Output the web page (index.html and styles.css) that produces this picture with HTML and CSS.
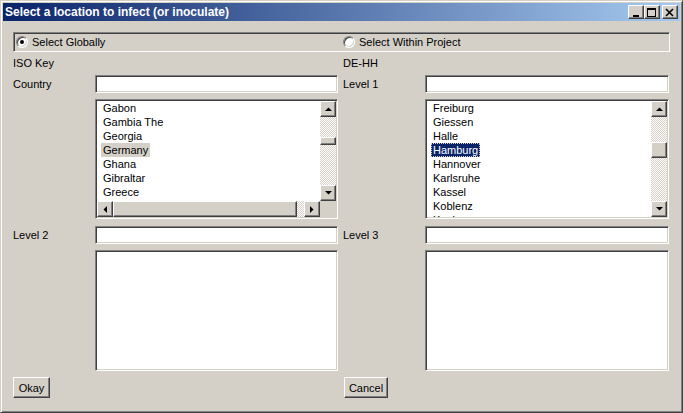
FILE: index.html
```html
<!DOCTYPE html>
<html>
<head>
<meta charset="utf-8">
<link rel="stylesheet" href="styles.css">
</head>
<body>
<div class="window">
  <div class="titlebar">
    <span class="title">Select a location to infect (or inoculate)</span>
    <div class="tb-buttons">
      <span class="raised tb-btn"><svg width="10" height="9" viewBox="0 0 10 9"><rect x="2" y="7" width="6" height="2" fill="#000"/></svg></span>
      <span class="raised tb-btn"><svg width="10" height="9" viewBox="0 0 10 9"><path d="M0 0h9v9h-9z M1 2v6h7v-6z" fill="#000" fill-rule="evenodd"/></svg></span>
      <span class="raised tb-btn close"><svg width="10" height="9" viewBox="0 0 10 9"><path d="M1 1l7 7M8 1l-7 7" stroke="#000" stroke-width="1.6"/></svg></span>
    </div>
  </div>
  <div class="content">
    <div class="radio-group">
      <label class="radio-opt"><span class="radio checked"></span>Select Globally</label>
      <label class="radio-opt"><span class="radio"></span>Select Within Project</label>
    </div>
    <div class="form">
      <div class="label">ISO Key</div>
      <div></div>
      <div class="label label-r">DE-HH</div>
      <div></div>

      <div class="label">Country</div>
      <div class="sunken field"></div>
      <div class="label label-r">Level 1</div>
      <div class="sunken field"></div>

      <div></div>
      <div class="sunken listbox with-h">
        <div class="items">
          <span class="item">Gabon</span>
          <span class="item">Gambia The</span>
          <span class="item">Georgia</span>
          <span class="item sel-inactive">Germany</span>
          <span class="item">Ghana</span>
          <span class="item">Gibraltar</span>
          <span class="item">Greece</span>
          <span class="item">Greenland</span>
        </div>
        <div class="vscroll">
          <span class="raised sbtn"><svg width="7" height="4" viewBox="0 0 7 4"><polygon points="0,4 7,4 3.5,0.5" fill="#000"/></svg></span>
          <span class="track track-l1"></span>
          <span class="raised thumb thumb-l"></span>
          <span class="track grow"></span>
          <span class="raised sbtn"><svg width="7" height="4" viewBox="0 0 7 4"><polygon points="0,0 7,0 3.5,3.5" fill="#000"/></svg></span>
        </div>
        <div class="hscroll">
          <span class="raised sbtn"><svg width="4" height="7" viewBox="0 0 4 7"><polygon points="4,0 4,7 0.5,3.5" fill="#000"/></svg></span>
          <span class="raised hthumb"></span>
          <span class="track grow"></span>
          <span class="raised sbtn"><svg width="4" height="7" viewBox="0 0 4 7"><polygon points="0,0 0,7 3.5,3.5" fill="#000"/></svg></span>
        </div>
        <div class="corner"></div>
      </div>
      <div></div>
      <div class="sunken listbox">
        <div class="items">
          <span class="item">Freiburg</span>
          <span class="item">Giessen</span>
          <span class="item">Halle</span>
          <span class="item sel-active">Hamburg</span>
          <span class="item">Hannover</span>
          <span class="item">Karlsruhe</span>
          <span class="item">Kassel</span>
          <span class="item">Koblenz</span>
          <span class="item">Koeln</span>
        </div>
        <div class="vscroll">
          <span class="raised sbtn"><svg width="7" height="4" viewBox="0 0 7 4"><polygon points="0,4 7,4 3.5,0.5" fill="#000"/></svg></span>
          <span class="track track-r1"></span>
          <span class="raised thumb thumb-r"></span>
          <span class="track grow"></span>
          <span class="raised sbtn"><svg width="7" height="4" viewBox="0 0 7 4"><polygon points="0,0 7,0 3.5,3.5" fill="#000"/></svg></span>
        </div>
      </div>

      <div class="label">Level 2</div>
      <div class="sunken field"></div>
      <div class="label label-r">Level 3</div>
      <div class="sunken field"></div>

      <div></div>
      <div class="sunken area"></div>
      <div></div>
      <div class="sunken area"></div>

      <div><span class="raised button okay">Okay</span></div>
      <div></div>
      <div><span class="raised button cancel">Cancel</span></div>
      <div></div>
    </div>
  </div>
</div>
</body>
</html>
```
FILE: styles.css
```css
* { box-sizing: border-box; }
body {
  margin: 0;
  font: 11px "Liberation Sans", Arial, sans-serif;
  color: #000;
}
.window {
  width: 683px;
  height: 413px;
  background: #d4d0c8;
  border: 1px solid;
  border-color: #d4d0c8 #404040 #404040 #d4d0c8;
  box-shadow: inset 1px 1px #fff, inset -1px -1px #808080;
  padding: 2px;
  display: flex;
  flex-direction: column;
}
.raised {
  background: #d4d0c8;
  border: 1px solid;
  border-color: #fff #404040 #404040 #fff;
  box-shadow: inset -1px -1px #808080, inset 1px 1px #d4d0c8;
}
.sunken {
  background: #fff;
  border: 1px solid;
  border-color: #808080 #fff #fff #808080;
  box-shadow: inset 1px 1px #404040, inset -1px -1px #d4d0c8;
}
.titlebar {
  height: 18px;
  flex: none;
  background: linear-gradient(to right, #0a246a, #a6caf0);
  display: flex;
  justify-content: space-between;
  align-items: flex-start;
  color: #fff;
}
.title {
  font-weight: bold;
  font-size: 12px;
  line-height: 18px;
  padding-left: 2px;
}
.tb-buttons {
  display: flex;
  margin-top: 2px;
  margin-right: 2px;
}
.tb-btn {
  width: 16px;
  height: 14px;
  display: flex;
  align-items: center;
  justify-content: center;
}
.tb-btn.close { margin-left: 2px; }
.content {
  padding: 11px 0 0 10px;
}
.radio-group {
  width: 657px;
  height: 20px;
  border: 1px solid;
  border-color: #808080 #fff #fff #808080;
  box-shadow: inset 1px 1px #404040;
  display: grid;
  grid-template-columns: 327px 1fr;
  align-items: center;
  padding-left: 2px;
}
.radio-opt {
  display: flex;
  align-items: center;
  gap: 4px;
}
.radio {
  width: 12px;
  height: 12px;
  border-radius: 50%;
  border: 1px solid;
  border-color: #808080 #fff #fff #808080;
  box-shadow: inset 1px 1px #404040, inset -1px -1px #d4d0c8;
  background: #fff;
  display: flex;
  align-items: center;
  justify-content: center;
}
.radio.checked::after {
  content: "";
  width: 4px;
  height: 4px;
  border-radius: 50%;
  background: #000;
}
.form {
  margin-top: 4px;
  display: grid;
  grid-template-columns: 82px 243px 87px 244px;
  grid-template-rows: 13px 18px 121px 18px 121px 21px;
  row-gap: 6px;
  align-items: center;
}
.label { line-height: 14px; }
.label-r { padding-left: 5px; }
.field { height: 18px; }
.listbox {
  align-self: start;
  height: 120px;
  display: grid;
  grid-template-columns: 1fr 16px;
  grid-template-rows: 1fr;
  overflow: hidden;
  padding: 1px;
}
.listbox.with-h { grid-template-rows: 1fr 16px; }
.items {
  overflow: hidden;
  display: flex;
  flex-direction: column;
  align-items: flex-start;
  min-height: 0;
}
.item {
  flex: none;
  line-height: 14px;
  height: 14px;
  margin-left: 4px;
  padding: 0 2px;
  white-space: nowrap;
}
.sel-inactive { background: #d4d0c8; }
.sel-active {
  background: #0a246a;
  color: #fff;
  outline: 1px dotted #d4d0c8;
  outline-offset: -1px;
}
.vscroll {
  display: flex;
  flex-direction: column;
  min-height: 0;
}
.hscroll { display: flex; }
.sbtn {
  flex: none;
  width: 16px;
  height: 16px;
  display: flex;
  align-items: center;
  justify-content: center;
}
.track {
  flex: none;
  background: repeating-conic-gradient(#fff 0 25%, #d4d0c8 0 50%) 0 0 / 2px 2px;
}
.track.grow { flex: 1; }
.track-l1 { height: 20px; }
.track-r1 { height: 25px; }
.thumb { flex: none; width: 16px; }
.thumb-l { height: 8px; }
.thumb-r { height: 16px; }
.hthumb { flex: none; width: 184px; height: 16px; }
.corner { background: #d4d0c8; }
.area { height: 121px; }
.button {
  display: flex;
  align-items: center;
  justify-content: center;
  height: 21px;
}
.okay { width: 37px; }
.cancel { width: 44px; margin-left: 6px; }
```
